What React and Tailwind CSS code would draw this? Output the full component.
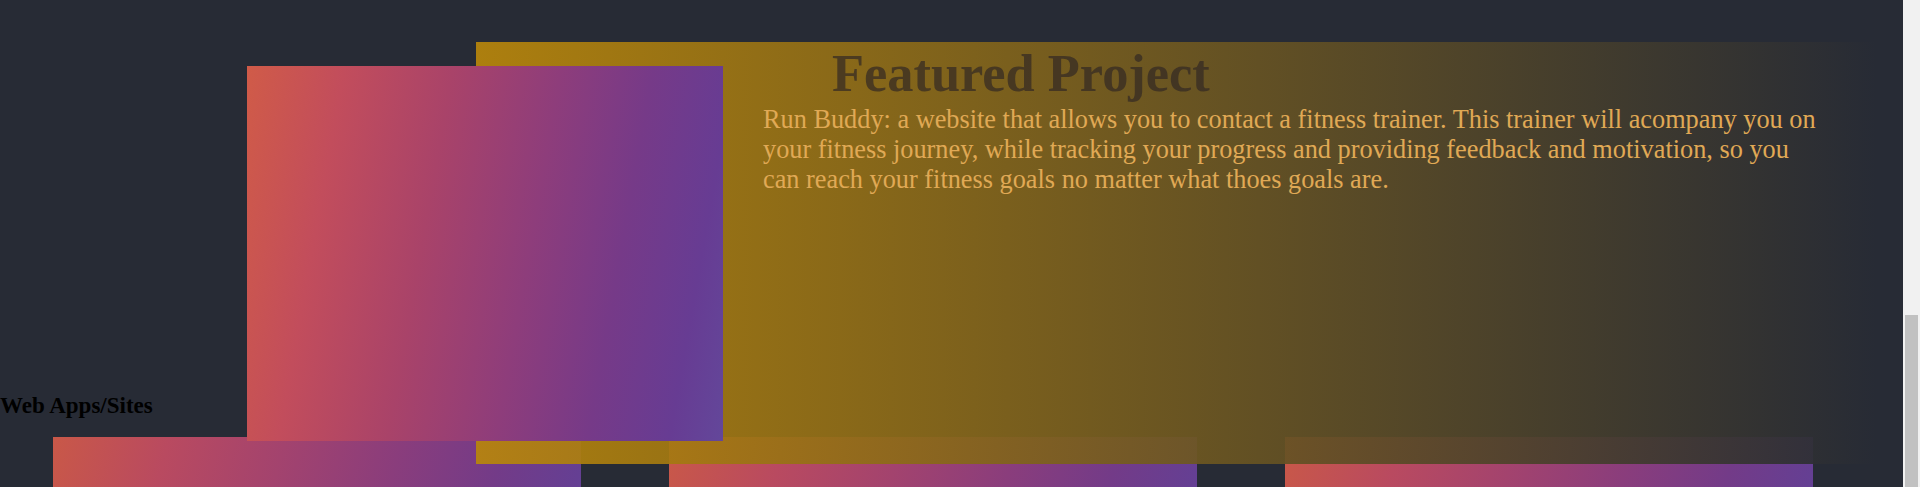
import React from 'react';

const projects = [
  { id: 1, name: 'Run Buddy' },
  { id: 2, name: 'Weather Dashboard' },
  { id: 3, name: 'Code Quiz' }
];

const App = () => {
  return (
    <div className="flex h-[487px] w-full overflow-hidden bg-[#272b35] font-['Liberation_Serif',serif]">
      {/* Page */}
      <main className="flex-1 flex flex-col">
        {/* Featured Project */}
        <div className="pt-[42px]">
          <section className="relative z-10 ml-[476px] w-[1400px] h-[422px] bg-[linear-gradient(to_right,rgba(184,134,11,0.92),rgba(39,43,53,0.92))]">
            <div className="absolute left-[-229px] top-[24px] w-[476px] h-[375px] bg-[linear-gradient(100deg,#d05b48_0%,#c24d5c_18%,#a94369_38%,#8e3d7b_58%,#763a88_75%,#673c93_90%,#63479a_100%)]"></div>
            <h1 className="ml-[356px] text-[52.4px] font-bold leading-[62px] text-[rgba(50,40,35,0.7)]">
              Featured Project
            </h1>
            <p className="mt-[1px] ml-[287px] w-[1064px] text-[26.3px] leading-[1.15] text-[#e0a955]">
              Run Buddy: a website that allows you to contact a fitness trainer. This trainer will acompany you on your fitness journey, while tracking your progress and providing feedback and motivation, so you can reach your fitness goals no matter what thoes goals are.
            </p>
          </section>
        </div>

        {/* Web Apps */}
        <div className="-mt-[70px]">
          <h3 className="text-[23px] font-bold leading-[24px] text-black mb-[19px]">Web Apps/Sites</h3>
          <div className="flex gap-[88px] pl-[53px]">
            {projects.map(project => (
              <div
                key={project.id}
                className="w-[528px] h-[200px] shrink-0 bg-[linear-gradient(105deg,#c95848_0%,#b94a60_20%,#a3436e_40%,#8a3d7c_60%,#733b88_78%,#653f93_92%,#62479a_100%)]"
              ></div>
            ))}
          </div>
        </div>
      </main>

      {/* Scrollbar */}
      <div className="w-[17px] shrink-0 bg-[#f1f1f1] flex flex-col justify-end">
        <div className="mx-[2px] h-[172px] bg-[#c1c1c1]"></div>
      </div>
    </div>
  );
};

export default App;
